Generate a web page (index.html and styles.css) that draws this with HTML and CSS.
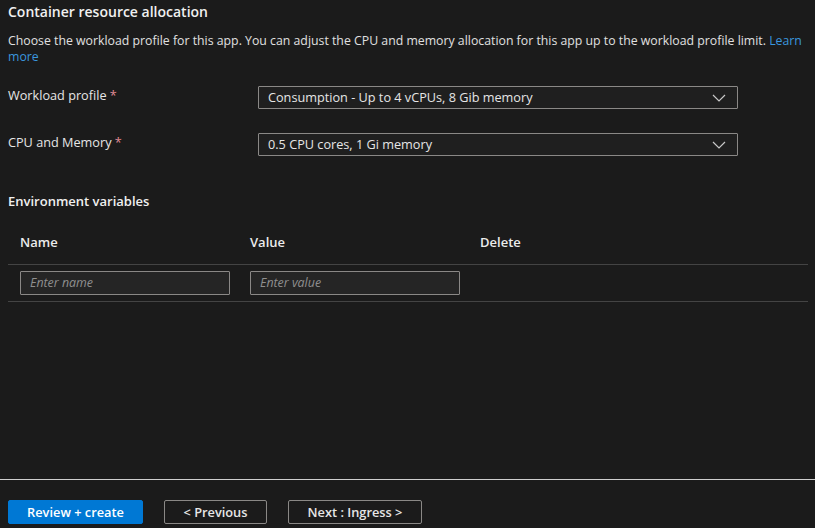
FILE: index.html
```html
<!DOCTYPE html>
<html>
<head>
<meta charset="utf-8">
<link rel="stylesheet" href="styles.css">
</head>
<body>
<div class="page">
  <main class="content">
    <h2 class="section-title">Container resource allocation</h2>
    <p class="desc">Choose the workload profile for this app. You can adjust the CPU and memory allocation for this app up to the workload profile limit. <a class="link" href="#">Learn</a> <a class="link" href="#">more</a></p>

    <div class="field">
      <label class="label">Workload profile <span class="req">*</span></label>
      <div class="select">
        <span>Consumption - Up to 4 vCPUs, 8 Gib memory</span>
        <svg class="chev" width="14" height="8" viewBox="0 0 14 8"><path d="M1 1l6 6 6-6" fill="none" stroke="#c8c8c8" stroke-width="1.2"/></svg>
      </div>
    </div>
    <div class="field">
      <label class="label">CPU and Memory <span class="req">*</span></label>
      <div class="select">
        <span>0.5 CPU cores, 1 Gi memory</span>
        <svg class="chev" width="14" height="8" viewBox="0 0 14 8"><path d="M1 1l6 6 6-6" fill="none" stroke="#c8c8c8" stroke-width="1.2"/></svg>
      </div>
    </div>

    <h3 class="sub-title">Environment variables</h3>
    <div class="table">
      <div class="row head">
        <div class="cell">Name</div>
        <div class="cell">Value</div>
        <div class="cell">Delete</div>
      </div>
      <div class="row body">
        <div class="cell"><div class="input">Enter name</div></div>
        <div class="cell"><div class="input">Enter value</div></div>
        <div class="cell"></div>
      </div>
    </div>
  </main>
  <footer class="footer">
    <button class="btn primary">Review + create</button>
    <button class="btn secondary prev">&lt; Previous</button>
    <button class="btn secondary next">Next : Ingress &gt;</button>
  </footer>
</div>
</body>
</html>
```

FILE: styles.css
```css
* { box-sizing: border-box; }
html, body { margin: 0; padding: 0; }
body {
  background: #1b1b1b;
  color: #e6e6e6;
  font-family: "Open Sans", "Noto Sans", sans-serif;
  font-size: 13px;
  width: 815px;
  height: 528px;
  overflow: hidden;
}
.page {
  height: 528px;
  display: flex;
  flex-direction: column;
}
.content {
  flex: 1;
  padding: 0 7px 0 8px;
}
.section-title {
  margin: 0;
  padding-top: 3px;
  font-size: 14px;
  font-weight: 600;
  line-height: 18px;
  color: #f0f0f0;
}
.desc {
  margin: 12px 0 0;
  line-height: 16px;
  color: #e0e0e0;
  font-size: 12.3px;
}
.link { color: #3a96dd; text-decoration: none; }
.field {
  display: flex;
  align-items: flex-start;
  margin-top: 21px;
}
.field + .field { margin-top: 24px; }
.label {
  width: 250px;
  padding-top: 1px;
  line-height: 16px;
  color: #e6e6e6;
  font-size: 12.7px;
}
.req { color: #e08a95; }
.select {
  width: 480px;
  height: 23px;
  border: 1px solid #8a8886;
  border-radius: 1px;
  background: #1f1f1f;
  display: flex;
  align-items: center;
  justify-content: space-between;
  padding: 0 11px 0 9px;
  color: #e6e6e6;
  font-size: 12.7px;
}
.select span { position: relative; top: -1px; }
.chev { display: block; }
.sub-title {
  margin: 36px 0 0;
  font-size: 13px;
  font-weight: 600;
  line-height: 18px;
  color: #f0f0f0;
}
.table { margin-top: 24px; width: 800px; }
.row { display: grid; grid-template-columns: 230px 230px 1fr; padding-left: 12px; }
.row.head { height: 31px; align-items: start; font-weight: 600; color: #ececec; border-bottom: 1px solid #444; }
.row.head .cell { line-height: 16px; }
.row.body { height: 37px; align-items: center; border-bottom: 1px solid #444; }
.input {
  width: 210px;
  height: 24px;
  border: 1px solid #8a8886;
  border-radius: 1px;
  background: #252525;
  color: #8f8f8f;
  font-style: italic;
  padding: 0 9px;
  line-height: 22px;
  font-size: 12.4px;
}
.footer {
  border-top: 1px solid #cfcfcf;
  height: 49px;
  padding: 20px 8px 0;
  display: flex;
  gap: 21px;
}
.btn {
  height: 24px;
  font-family: inherit;
  font-size: 12.8px;
  font-weight: 600;
  border-radius: 2px;
  padding: 1px 0 0;
  line-height: 21px;
}
.primary {
  width: 135px;
  background: #0078d4;
  border: 1px solid #0078d4;
  color: #fff;
}
.secondary {
  background: transparent;
  border: 1px solid #8a8886;
  color: #e6e6e6;
}
.prev { width: 103px; }
.next { width: 134px; }
```
